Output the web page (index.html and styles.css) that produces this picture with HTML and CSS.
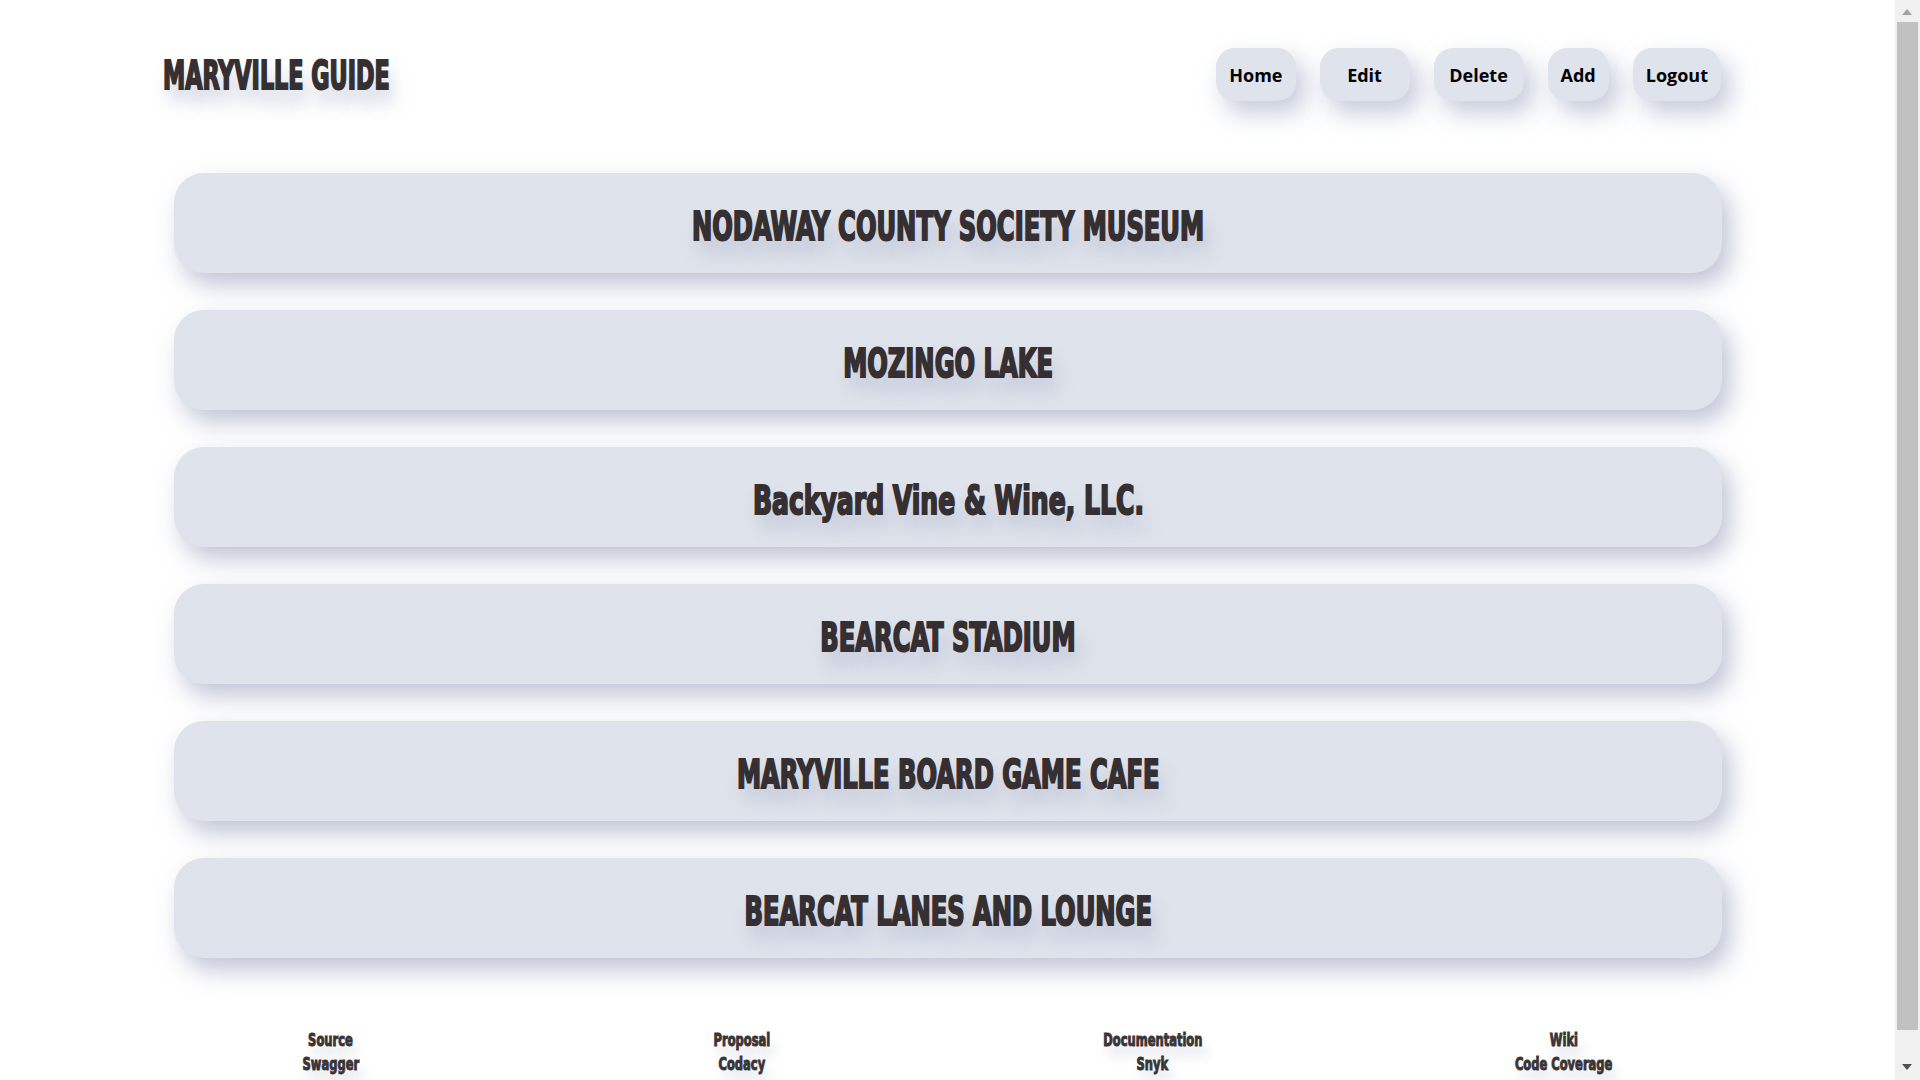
FILE: index.html
```html
<!DOCTYPE html>
<html lang="en">
<head>
<meta charset="utf-8">
<title>Maryville Guide</title>
<link rel="stylesheet" href="styles.css">
</head>
<body>
<header class="topbar">
  <h1 class="brand"><span class="impact brand-text">MARYVILLE GUIDE</span></h1>
  <nav class="nav">
    <a class="nav-btn" href="#">Home</a>
    <a class="nav-btn nav-btn-wide" href="#">Edit</a>
    <a class="nav-btn nav-btn-wide" href="#">Delete</a>
    <a class="nav-btn" href="#">Add</a>
    <a class="nav-btn" href="#">Logout</a>
  </nav>
</header>
<main class="list">
  <div class="card"><span class="impact card-title">NODAWAY COUNTY SOCIETY MUSEUM</span></div>
  <div class="card"><span class="impact card-title">MOZINGO LAKE</span></div>
  <div class="card"><span class="impact card-title card-title-mixed">Backyard Vine &amp; Wine, LLC.</span></div>
  <div class="card"><span class="impact card-title">BEARCAT STADIUM</span></div>
  <div class="card"><span class="impact card-title">MARYVILLE BOARD GAME CAFE</span></div>
  <div class="card"><span class="impact card-title">BEARCAT LANES AND LOUNGE</span></div>
</main>
<footer class="footer">
  <div class="footer-col"><a class="impact foot-link" href="#">Source</a><a class="impact foot-link" href="#">Swagger</a></div>
  <div class="footer-col"><a class="impact foot-link" href="#">Proposal</a><a class="impact foot-link" href="#">Codacy</a></div>
  <div class="footer-col"><a class="impact foot-link" href="#">Documentation</a><a class="impact foot-link" href="#">Snyk</a></div>
  <div class="footer-col"><a class="impact foot-link" href="#">Wiki</a><a class="impact foot-link" href="#">Code Coverage</a></div>
</footer>
<div class="scrollbar" aria-hidden="true">
  <span class="sb-arrow sb-up"></span>
  <span class="sb-thumb"></span>
  <span class="sb-arrow sb-down"></span>
</div>
</body>
</html>
```
FILE: styles.css
```css
html {
  background: #ffffff;
}
body {
  margin: 0;
  background: #ffffff;
  font-family: "Open Sans", "Noto Sans", sans-serif;
  color: #352f31;
}
a {
  text-decoration: none;
  color: inherit;
}

.impact {
  font-family: Impact, "Liberation Sans Narrow", "DejaVu Sans Condensed", "Liberation Sans", sans-serif;
  font-weight: 700;
  -webkit-text-stroke: 2px currentColor;
  display: inline-block;
  white-space: nowrap;
}

/* header */
.topbar {
  display: flex;
  justify-content: space-between;
  align-items: center;
  margin: 48px 0 0 163px;
  width: 1558px;
  height: 53px;
}
.brand {
  margin: 0;
  font-size: 39px;
  line-height: 39px;
  font-weight: 700;
}
.brand-text {
  transform: scaleX(0.635);
  transform-origin: left center;
  text-shadow: 8px 14px 20px rgba(150, 160, 190, 0.5);
  color: #352f31;
}
.nav {
  display: flex;
  gap: 24px;
}
.nav-btn {
  display: flex;
  align-items: center;
  justify-content: center;
  height: 53px;
  padding: 0 13px;
  box-sizing: border-box;
  border-radius: 19px;
  background: #dfe3eb;
  color: #000000;
  font-size: 18px;
  font-weight: 700;
  box-shadow: 9px 12px 24px rgba(150, 160, 190, 0.55);
}
.nav-btn-wide {
  min-width: 90px;
}

/* cards */
.list {
  display: flex;
  flex-direction: column;
  gap: 37px;
  margin: 72px 0 0 174px;
  width: 1548px;
}
.card {
  height: 100px;
  box-sizing: border-box;
  padding-top: 7px;
  border-radius: 30px;
  background: #dfe3eb;
  display: flex;
  align-items: center;
  justify-content: center;
  box-shadow: 8px 12px 24px rgba(140, 150, 180, 0.55);
}
.card-title {
  font-size: 39px;
  line-height: 39px;
  transform: scaleX(0.69);
  text-shadow: 8px 14px 20px rgba(150, 160, 190, 0.45);
}
.card-title-mixed {
  transform: scaleX(0.715);
}

/* footer */
.footer {
  display: grid;
  grid-template-columns: repeat(4, 1fr);
  margin: 70px 0 0 125px;
  width: 1644px;
  padding-bottom: 36px;
}
.footer-col {
  display: flex;
  flex-direction: column;
  align-items: center;
}
.foot-link {
  font-size: 18px;
  line-height: 24px;
  -webkit-text-stroke: 1px currentColor;
  transform: scaleX(0.71);
  color: #3a3436;
  text-shadow: 6px 10px 14px rgba(160, 170, 195, 0.4);
}

/* browser scrollbar, as drawn in the screenshot */
.scrollbar {
  position: fixed;
  top: 0;
  right: 0;
  bottom: 0;
  width: 25px;
  background: #f0f0f0;
}
.sb-thumb {
  position: absolute;
  top: 22px;
  left: 2px;
  right: 2px;
  height: 1008px;
  background: #c1c1c1;
}
.sb-arrow {
  position: absolute;
  left: 7px;
  width: 0;
  height: 0;
  border-left: 5px solid transparent;
  border-right: 5px solid transparent;
}
.sb-up {
  top: 9px;
  border-bottom: 6px solid #a3a3a3;
}
.sb-down {
  bottom: 10px;
  border-top: 6px solid #505050;
}
```
